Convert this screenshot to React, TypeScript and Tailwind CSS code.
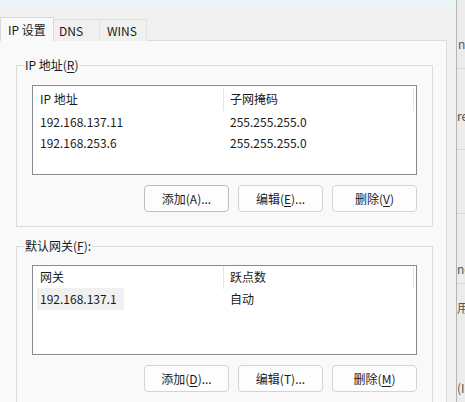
import React from "react";

const font = { fontFamily: '"Noto Sans CJK SC", "Noto Sans", sans-serif' };

function U({ c }: { c: string }) {
  return <span className="underline underline-offset-2">{c}</span>;
}

type Row = { a: string; b: string; hl?: boolean };

function ListBox({
  h1,
  h2,
  rows,
  tall,
}: {
  h1: string;
  h2: string;
  rows: Row[];
  tall: boolean;
}) {
  return (
    <div className="w-[385px] h-[90px] border border-[#868a91] bg-white flex flex-col shrink-0">
      <div className={tall ? "flex h-[25px] shrink-0 items-center pt-[1px]" : "flex h-[22px] shrink-0 items-center"}>
        <div className="w-[190px] pl-[7px]">{h1}</div>
        <div className="w-px h-[23px] bg-[#e5e5e5]" />
        <div className="w-[189px] pl-[6px]">{h2}</div>
        <div className="w-px h-[23px] bg-[#e5e5e5]" />
      </div>
      {rows.map((r, i) => (
        <div
          key={i}
          className={tall ? "flex h-[21px] shrink-0 items-center" : "flex h-[22px] shrink-0 items-center"}
        >
          <div className="w-[191px] pl-[4px] flex">
            <span
              className={
                r.hl
                  ? "bg-[#f0f0f0] pl-[3px] pr-[7px] h-[22px] flex items-center"
                  : "pl-[3px] h-[22px] flex items-center"
              }
            >
              {r.a}
            </span>
          </div>
          <div className="pl-[6px]">{r.b}</div>
        </div>
      ))}
    </div>
  );
}

function Btn({ children, dark }: { children: React.ReactNode; dark?: boolean }) {
  return (
    <div
      className={
        dark
          ? "w-[85px] h-[27px] rounded-[4px] border border-[#b9bec5] bg-[#fdfdfd] flex items-center justify-center"
          : "w-[85px] h-[27px] rounded-[4px] border border-[#d3d3d3] bg-[#fdfdfd] flex items-center justify-center"
      }
    >
      {children}
    </div>
  );
}

export default function App() {
  return (
    <div
      className="w-[465px] h-[402px] bg-[#f0f0f0] flex overflow-hidden text-[12px] text-[#1a1a1a]"
      style={font}
    >
      <div className="w-[456px] flex flex-col">
        <div className="h-[7px] shrink-0 bg-[#ebf4f7]" />
        <div className="h-[10px] shrink-0" />
        <div className="flex items-end h-[24px] shrink-0 relative z-10 -mb-px">
          <div className="w-[54px] h-[24px] border border-b-0 border-[#d9d9d9] bg-[#f9f9f9] pl-[7px] flex items-center">
            IP 设置
          </div>
          <div className="w-[46px] h-[22px] border-t border-r border-[#e0e0e0] bg-[#f0f0f0] pl-[5px] flex items-center">
            DNS
          </div>
          <div className="w-[47px] h-[22px] border-t border-r border-[#e0e0e0] bg-[#f0f0f0] pl-[7px] flex items-center">
            WINS
          </div>
        </div>
        <div className="w-[447px] flex-1 min-h-0 bg-[#f9f9f9] border-t border-r border-[#dcdcdc] pl-[16px]">
          <fieldset className="mt-[16px] w-[417px] border border-[#dcdcdc] p-0">
            <legend className="ml-[7px] px-[1px] leading-[16px]">
              IP 地址(<U c="R" />)
            </legend>
            <div className="pl-[15px] pt-[12px] pb-[14px]">
              <ListBox
                h1="IP 地址"
                h2="子网掩码"
                tall
                rows={[
                  { a: "192.168.137.11", b: "255.255.255.0" },
                  { a: "192.168.253.6", b: "255.255.255.0" },
                ]}
              />
              <div className="w-[385px] flex justify-end gap-[9px] mt-[10px]">
                <Btn dark>添加(A)...</Btn>
                <Btn>
                  编辑(<U c="E" />)...
                </Btn>
                <Btn>
                  删除(<U c="V" />)
                </Btn>
              </div>
            </div>
          </fieldset>
          <fieldset className="mt-[11px] w-[417px] border border-[#dcdcdc] p-0">
            <legend className="ml-[7px] px-[1px] leading-[16px]">
              默认网关(<U c="F" />):
            </legend>
            <div className="pl-[15px] pt-[11px] pb-[14px]">
              <ListBox
                h1="网关"
                h2="跃点数"
                tall={false}
                rows={[{ a: "192.168.137.1", b: "自动", hl: true }]}
              />
              <div className="w-[385px] flex justify-end gap-[9px] mt-[10px]">
                <Btn>
                  添加(<U c="D" />)...
                </Btn>
                <Btn>编辑(T)...</Btn>
                <Btn>
                  删除(<U c="M" />)
                </Btn>
              </div>
            </div>
          </fieldset>
        </div>
      </div>
      <div className="w-[9px] border-l border-[#b5b5b5] bg-[#ececec] flex flex-col text-[#555] overflow-hidden whitespace-nowrap">
        <div className="h-[68px] shrink-0 flex items-end pb-[15px] pl-[1px]">n1</div>
        <div className="h-[81px] shrink-0 border-t border-[#d6d6d6] flex items-end pb-[24px]">re</div>
        <div className="h-[64px] shrink-0 border-t border-[#d6d6d6]" />
        <div className="h-[70px] shrink-0 border-t border-[#d6d6d6] flex items-end pb-[5px]">ne</div>
        <div className="flex-1 border-t border-[#d6d6d6] flex flex-col pt-[15px]">
          <div>用户</div>
          <div className="mt-[62px]">(I</div>
        </div>
      </div>
    </div>
  );
}
